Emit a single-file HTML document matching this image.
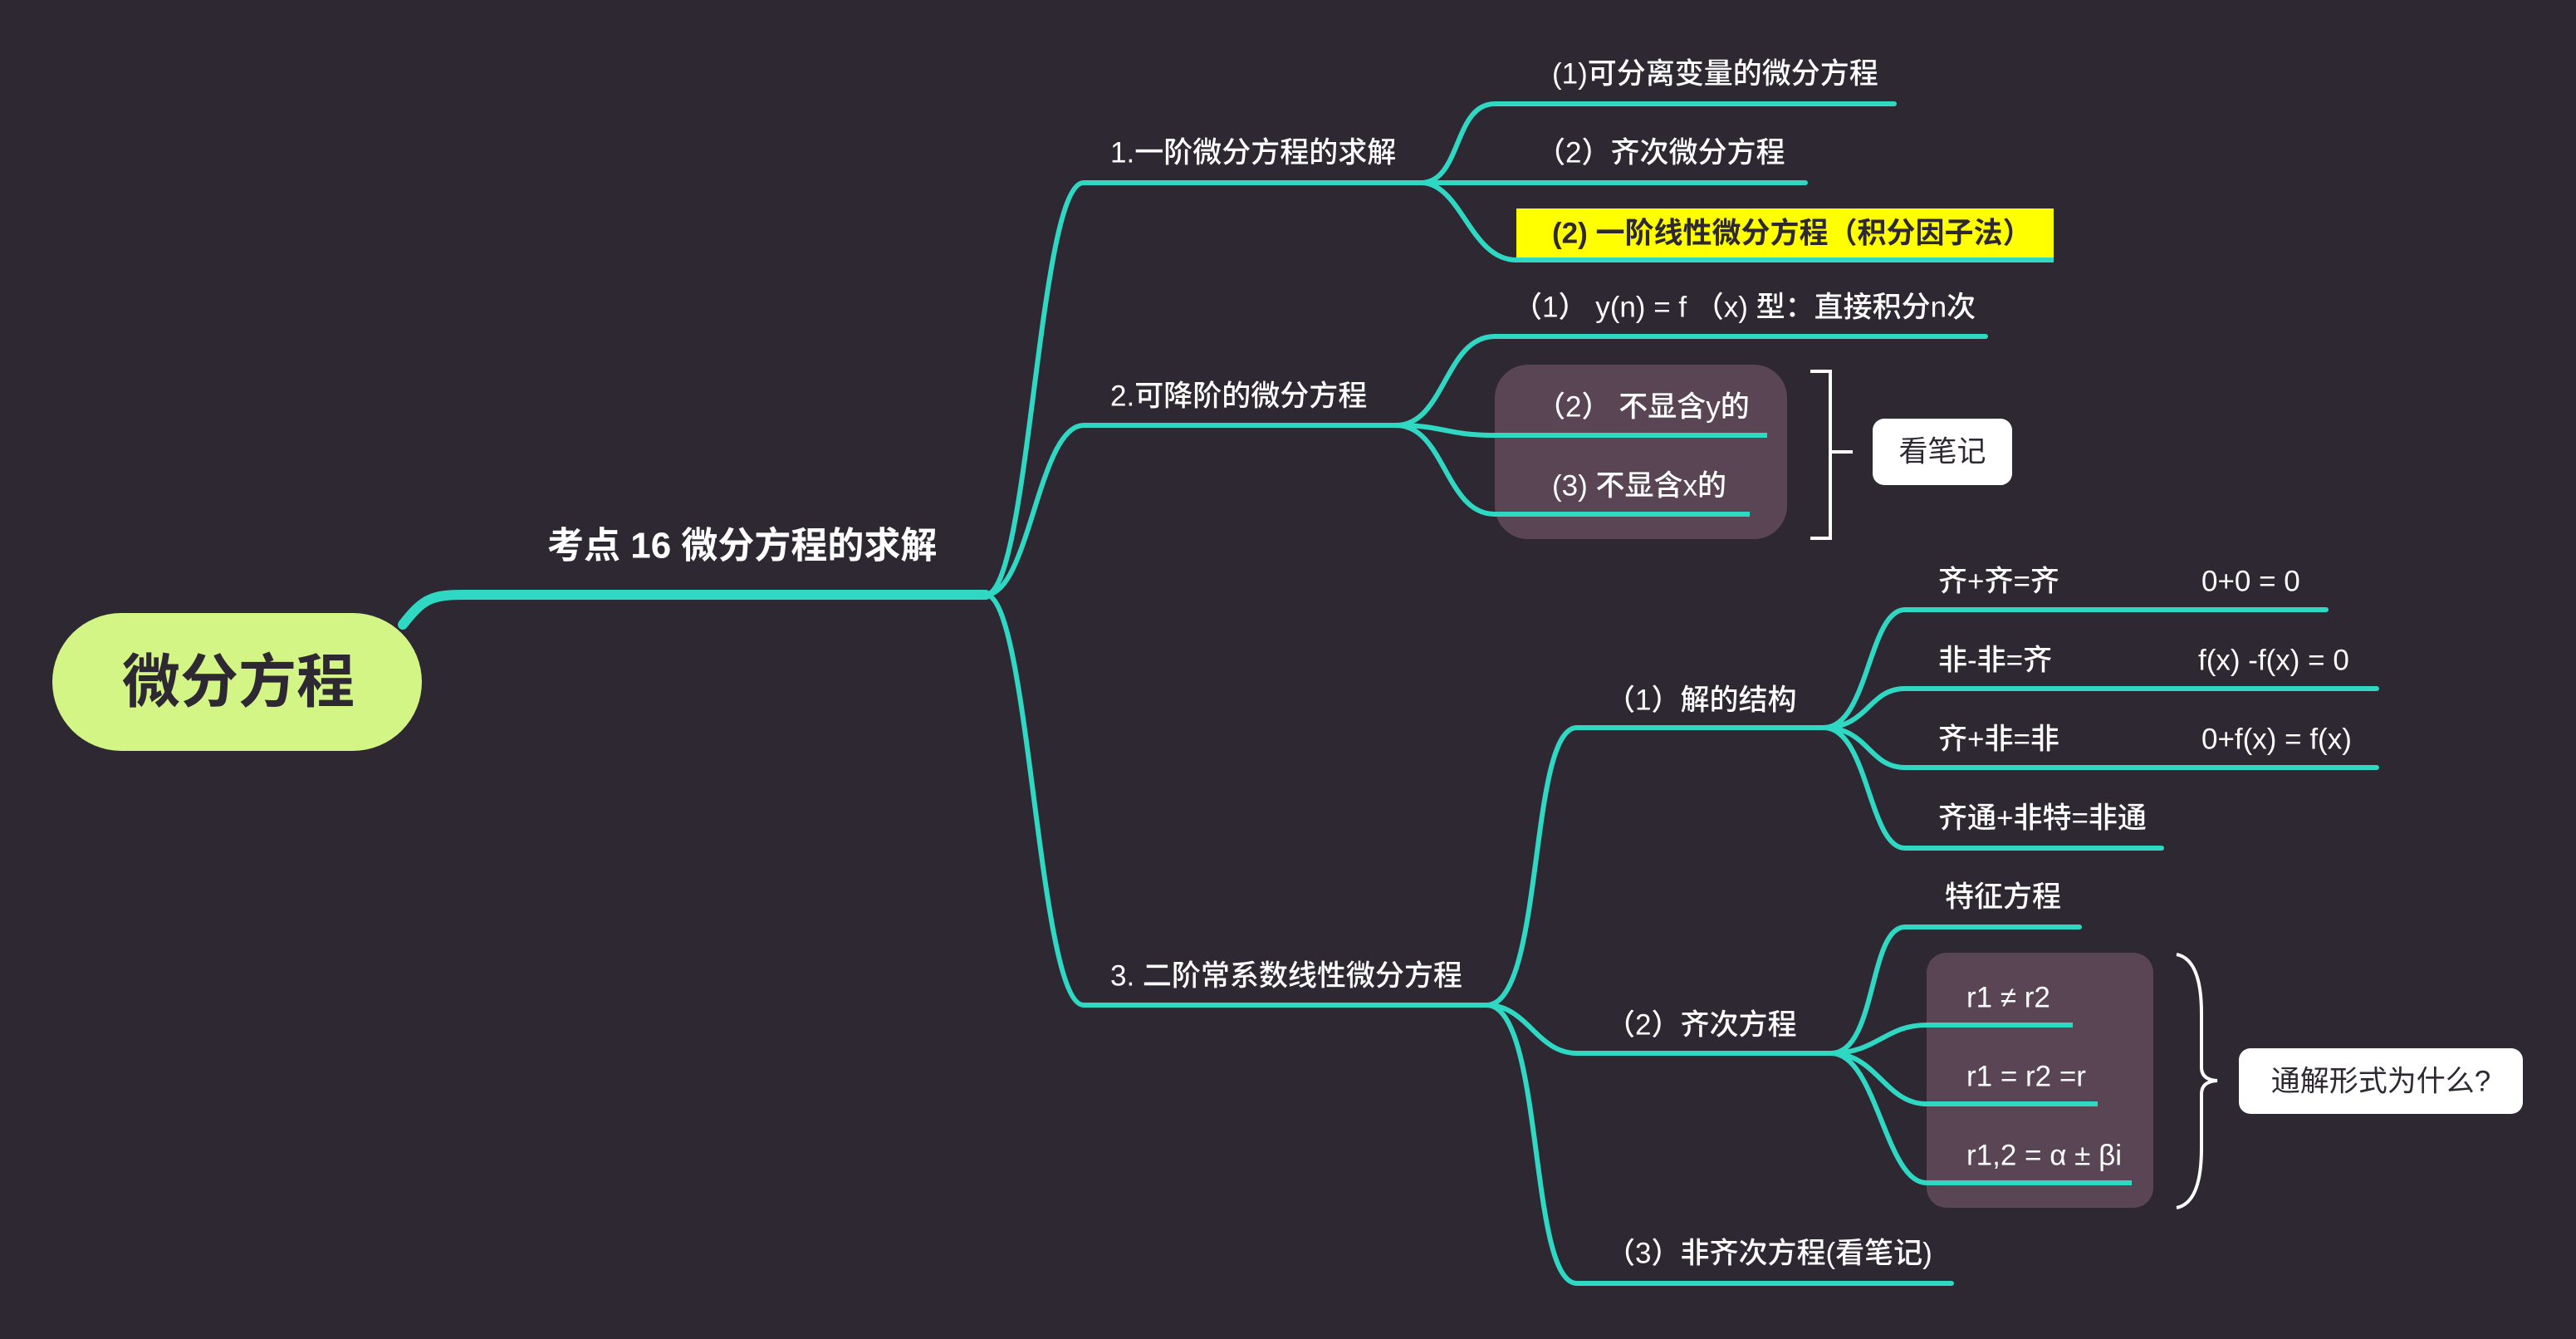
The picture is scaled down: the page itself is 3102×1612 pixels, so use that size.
<!DOCTYPE html>
<html><head><meta charset="utf-8"><style>
html,body{margin:0;padding:0;background:#2e2833;}
svg{display:block}
text{font-family:"Liberation Sans","Noto Sans CJK SC",sans-serif;fill:#fff;font-size:35px;font-weight:500;dominant-baseline:central}
</style></head><body>
<svg width="3102" height="1612" viewBox="0 0 3102 1612">
<rect width="3102" height="1612" fill="#2e2833"/>
<g fill="none" stroke="#2ed8c3" stroke-linecap="round">
<path d="M485 752 C510 720 520 716 560 716 L1187 716" stroke-width="12"/>
<path d="M1187 716 C1240 716 1250 220 1305 220 L1711 220" stroke-width="6"/>
<path d="M1187 716 C1240 716 1250 512 1305 512 L1681 512" stroke-width="6"/>
<path d="M1187 716 C1240 716 1250 1210 1305 1210 L1790 1210" stroke-width="6"/>
<path d="M1711 220 C1760 220 1750 125 1800 125 L2281 125" stroke-width="6"/>
<path d="M1711 220 L2174 220" stroke-width="6"/>
<path d="M1711 220 C1760 220 1770 313 1826 313" stroke-width="6"/>
<path d="M1681 512 C1740 512 1740 405 1800 405 L2391 405" stroke-width="6"/>
<path d="M1681 512 C1740 512 1740 524 1800 524" stroke-width="6"/>
<path d="M1681 512 C1740 512 1740 619 1800 619" stroke-width="6"/>
<path d="M1790 1210 C1860 1210 1840 876 1899 876 L2196 876" stroke-width="6"/>
<path d="M1790 1210 C1840 1210 1850 1268 1899 1268 L2205 1268" stroke-width="6"/>
<path d="M1790 1210 C1860 1210 1840 1545 1899 1545 L2350 1545" stroke-width="6"/>
<path d="M2196 876 C2250 876 2250 734 2294 734 L2801 734" stroke-width="6"/>
<path d="M2196 876 C2250 876 2250 829 2294 829 L2862 829" stroke-width="6"/>
<path d="M2196 876 C2250 876 2250 924 2294 924 L2862 924" stroke-width="6"/>
<path d="M2196 876 C2250 876 2250 1021 2294 1021 L2603 1021" stroke-width="6"/>
<path d="M2205 1268 C2260 1268 2250 1116 2294 1116 L2504 1116" stroke-width="6"/>
</g>
<rect x="63" y="738" width="445" height="166" rx="83" fill="#d2f585"/>
<text x="287" y="821" text-anchor="middle" style="font-size:70px;font-weight:700;fill:#2e2833">微分方程</text>
<text x="659" y="657" style="font-size:44px;font-weight:700">考点 16 微分方程的求解</text>
<text x="1337" y="184">1.一阶微分方程的求解</text>
<text x="1337" y="477">2.可降阶的微分方程</text>
<text x="1337" y="1175">3. 二阶常系数线性微分方程</text>
<text x="1869" y="89">(1)可分离变量的微分方程</text>
<text x="1850" y="184">（2）齐次微分方程</text>
<rect x="1826" y="251" width="647" height="64" fill="#ffff00"/>
<line x1="1826" y1="313" x2="2473" y2="313" stroke="#2ed8c3" stroke-width="6"/>
<text x="1869" y="281" style="fill:#2e2833;font-weight:700">(2) 一阶线性微分方程（积分因子法）</text>
<text x="1822" y="370">（1） y(n) = f （x) 型：直接积分n次</text>
<rect x="1800" y="439" width="352" height="210" rx="40" fill="#5a4555"/>
<g stroke="#2ed8c3" stroke-width="6"><line x1="1800" y1="524" x2="2128" y2="524"/><line x1="1800" y1="619" x2="2107" y2="619"/></g>
<text x="1850" y="490">（2） 不显含y的</text>
<text x="1869" y="585">(3) 不显含x的</text>
<path d="M2180 447 H2204 V648 H2180 M2204 544 H2231" fill="none" stroke="#fff" stroke-width="4"/>
<rect x="2255" y="504" width="168" height="80" rx="14" fill="#fff"/>
<text x="2339" y="544" text-anchor="middle" style="fill:#2e2833;font-weight:400">看笔记</text>
<text x="1934" y="843">（1）解的结构</text>
<text x="1934" y="1234">（2）齐次方程</text>
<text x="1934" y="1509">（3）非齐次方程(看笔记)</text>
<text x="2334" y="700">齐+齐=齐</text><text x="2651" y="700">0+0 = 0</text>
<text x="2334" y="795">非-非=齐</text><text x="2647" y="795">f(x) -f(x) = 0</text>
<text x="2334" y="890">齐+非=非</text><text x="2651" y="890">0+f(x) = f(x)</text>
<text x="2334" y="985">齐通+非特=非通</text>
<text x="2342" y="1080">特征方程</text>
<rect x="2320" y="1147" width="273" height="307" rx="24" fill="#5a4555"/>
<g fill="none" stroke="#2ed8c3" stroke-width="6">
<path d="M2205 1268 C2260 1268 2270 1234 2320 1234 L2496 1234"/>
<path d="M2205 1268 C2260 1268 2270 1329 2320 1329 L2526 1329"/>
<path d="M2205 1268 C2260 1268 2270 1424 2320 1424 L2567 1424"/>
</g>
<text x="2368" y="1201">r1 ≠ r2</text>
<text x="2368" y="1296">r1 = r2 =r</text>
<text x="2368" y="1391">r1,2 = α ± βi</text>
<path d="M2621 1149 Q2651 1155 2651 1220 L2651 1285 Q2651 1300 2670 1301 Q2651 1302 2651 1317 L2651 1382 Q2651 1448 2621 1454" fill="none" stroke="#fff" stroke-width="4"/>
<rect x="2696" y="1262" width="342" height="79" rx="14" fill="#fff"/>
<text x="2867" y="1302" text-anchor="middle" style="fill:#2e2833;font-weight:400">通解形式为什么?</text>
</svg>
</body></html>
